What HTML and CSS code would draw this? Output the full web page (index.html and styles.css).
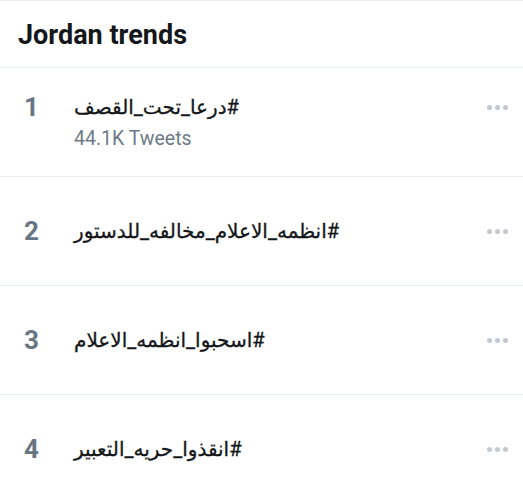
FILE: index.html
```html
<!DOCTYPE html>
<html lang="en">
  <head>
    <meta charset="UTF-8" />
    <meta name="viewport" content="width=device-width, initial-scale=1.0" />
    <title>Jordan trends</title>
    <link rel="stylesheet" href="styles.css">
  </head>
  <body>
    <div id="trends">
      <div id="title">Jordan trends</div>

      <!-- Trend rows -->
      <div class="trend">
        <div class="trend-rank">1</div>
        <div class="trend-name"><span dir="rtl">#درعا_تحت_القصف</span></div>
        <div class="trend-more"><span></span><span></span><span></span></div>
        <div class="trend-count">44.1K Tweets</div>
      </div>

      <div class="trend">
        <div class="trend-rank">2</div>
        <div class="trend-name"><span dir="rtl">#انظمه_الاعلام_مخالفه_للدستور</span></div>
        <div class="trend-more"><span></span><span></span><span></span></div>
      </div>

      <div class="trend">
        <div class="trend-rank">3</div>
        <div class="trend-name"><span dir="rtl">#اسحبوا_انظمه_الاعلام</span></div>
        <div class="trend-more"><span></span><span></span><span></span></div>
      </div>

      <div class="trend">
        <div class="trend-rank">4</div>
        <div class="trend-name"><span dir="rtl">#انقذوا_حريه_التعبير</span></div>
        <div class="trend-more"><span></span><span></span><span></span></div>
      </div>
    </div>
  </body>
</html>
```
FILE: styles.css
```css
body {
  margin: 0;
  background: #fff;
  font-family: Roboto, "DejaVu Sans", sans-serif;
  color: #14171a;
}

#trends {
  border-top: 1px solid #e6ecf0;
}

#title {
  height: 66px;
  padding-left: 18px;
  font-size: 27px;
  font-weight: bold;
  line-height: 68px;
  border-bottom: 1px solid #e6ecf0;
}

.trend {
  display: grid;
  grid-template-columns: 50px 1fr 36px;
  align-content: center;
  height: 108px;
  padding-left: 24px;
  border-bottom: 1px solid #e6ecf0;
}

.trend-rank {
  font-size: 26px;
  font-weight: bold;
  line-height: 24px;
  color: #687684;
}

.trend-name {
  font-size: 20px;
  line-height: 24px;
  -webkit-text-stroke: 0.3px #14171a;
}

.trend-count {
  grid-column: 2;
  margin-top: 10px;
  font-size: 19.5px;
  line-height: 20px;
  color: #6e7b87;
}

.trend-more {
  display: flex;
  gap: 3px;
  align-items: center;
  height: 24px;
}

.trend-more span {
  width: 5px;
  height: 5px;
  border-radius: 50%;
  background: #c0c8d0;
}
```
